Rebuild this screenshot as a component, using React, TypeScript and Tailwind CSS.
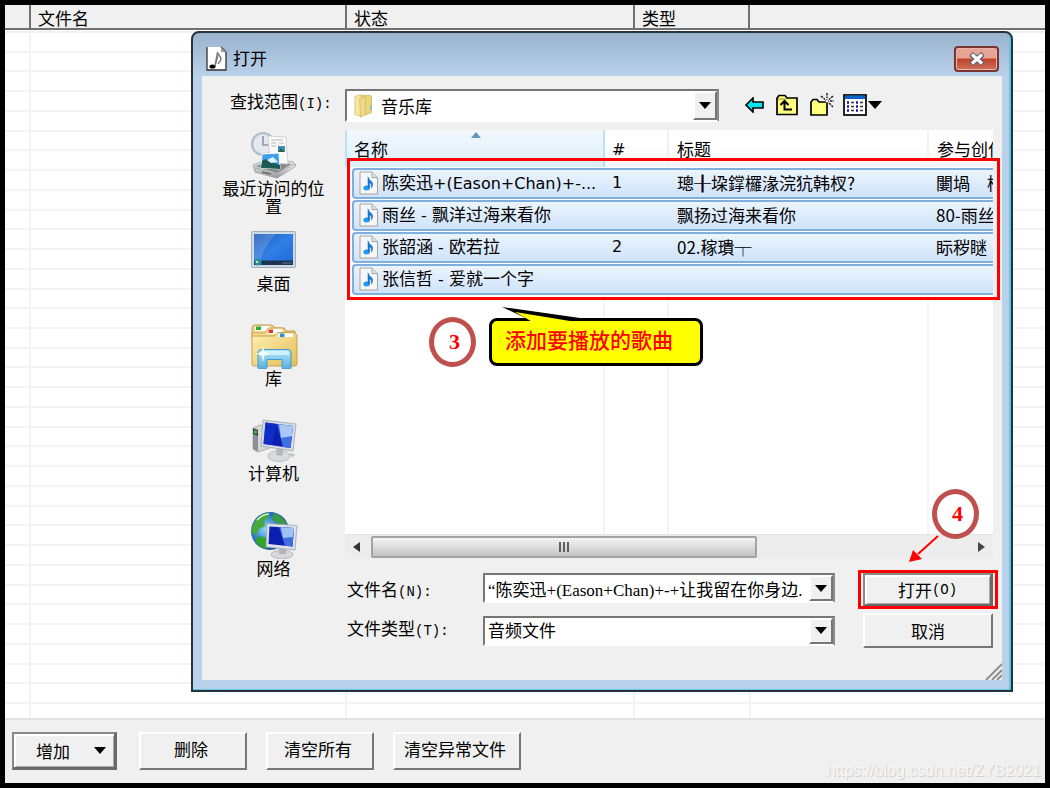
import type { ReactNode } from "react";

interface Song {
  name: ReactNode;
  track: string;
  title: string;
  artist: string;
}

const Latin = ({ children }: { children: ReactNode }) => (
  <span className="font-['DejaVu_Sans',sans-serif] text-base">{children}</span>
);

// Access key after a label, e.g. (N):
const Key = ({ children }: { children: ReactNode }) => (
  <span className="font-['Liberation_Mono',monospace] text-sm">{children}</span>
);

const songs: Song[] = [
  {
    name: (
      <>
        陈奕迅<Latin>+(Eason+Chan)+-...</Latin>
      </>
    ),
    track: "1",
    title: "璁╂垜鐣欏湪浣犺韩杈?",
    artist: "闄堝　杩",
  },
  { name: <>雨丝<Latin> - </Latin>飘洋过海来看你</>, track: "", title: "飘扬过海来看你", artist: "80-雨丝" },
  { name: <>张韶涵<Latin> - </Latin>欧若拉</>, track: "2", title: "02.稼璝┬", artist: "眎秽瞇" },
  { name: <>张信哲<Latin> - </Latin>爱就一个字</>, track: "", title: "", artist: "" },
];

const RecentIcon = () => (
  <svg width="48" height="48" viewBox="0 0 48 48" aria-hidden="true">
    <defs>
      <linearGradient id="tray" x1="0" y1="0" x2="0" y2="1">
        <stop offset="0" stopColor="#f4f4f4" />
        <stop offset="1" stopColor="#8f9294" />
      </linearGradient>
    </defs>
    <path d="M3 34 L20 27 L43 31 L46 34 L27 47 L5 41 Z" fill="url(#tray)" stroke="#a5a5a5" strokeWidth="0.8" />
    <path d="M6 35 L21 30 L41 33 L27 42 Z" fill="#85898c" />
    <circle cx="13" cy="13" r="11" fill="#dfe5eb" stroke="#b3bcc6" strokeWidth="2.2" />
    <circle cx="13" cy="13" r="8.5" fill="#e3e9ef" />
    <path d="M13 5 V14 H19" stroke="#8796a8" strokeWidth="1.6" fill="none" />
    <path d="M18 5 L36 6 L38 33 L20 32 Z" fill="#fafafa" stroke="#c9c9c9" strokeWidth="0.8" />
    <path d="M21 9 H33 M21 12 H26 M29 12 H34 M21 15 H26" stroke="#b5b5b5" strokeWidth="1" />
    <rect x="28" y="15" width="7" height="6" fill="#3f8db8" />
    <path d="M28 21 L31 17 L35 21 Z" fill="#2b6a45" />
    <path d="M12 23 L29 22 L30 38 L11 37 Z" fill="#3f9fe8" stroke="#fff" strokeWidth="1" />
    <path d="M12 30 Q17 26 21 31 L30 34 V38 L11 37 Z" fill="#1b5a55" />
    <path d="M17 29 L23 26 L28 31 L21 32 Z" fill="#e2f3fb" />
    <path d="M5 37 L27 42 L45 33 V36 L27 47 L5 41 Z" fill="url(#tray)" stroke="#a5a5a5" strokeWidth="0.7" />
    <path d="M12 41 L21 43" stroke="#666" strokeWidth="1.5" />
  </svg>
);

const DesktopIcon = () => (
  <svg width="48" height="48" viewBox="0 0 48 48" aria-hidden="true">
    <defs>
      <linearGradient id="desk" x1="0" y1="0" x2="1" y2="1">
        <stop offset="0" stopColor="#1f55b5" />
        <stop offset="0.5" stopColor="#2f80e6" />
        <stop offset="1" stopColor="#2365d8" />
      </linearGradient>
    </defs>
    <rect x="1.5" y="5.5" width="44" height="36" rx="1" fill="#cdd9e3" stroke="#9fb0bf" />
    <rect x="4" y="8" width="39" height="31" fill="url(#desk)" />
    <path d="M4 8 H26 Q14 20 10 35 H4 Z" fill="#fff" opacity="0.16" />
    <rect x="4" y="34.5" width="39" height="4.5" fill="#1c3450" />
    <circle cx="8" cy="36" r="3.5" fill="#2c8ba8" />
    <path d="M6 35 H8 V37 H6 Z" fill="#d9f47a" />
    <path d="M32 37 H42" stroke="#5d7690" strokeWidth="1" />
  </svg>
);

const LibraryIcon = () => (
  <svg width="48" height="48" viewBox="0 0 48 48" aria-hidden="true">
    <defs>
      <linearGradient id="folder" x1="0" y1="0" x2="1" y2="1">
        <stop offset="0" stopColor="#fff0b4" />
        <stop offset="1" stopColor="#e3bd57" />
      </linearGradient>
      <linearGradient id="stand" x1="0" y1="0" x2="0" y2="1">
        <stop offset="0" stopColor="#b5e9fb" />
        <stop offset="1" stopColor="#59addc" />
      </linearGradient>
    </defs>
    <path d="M2 7 Q2 4 5 4 H22 L25 7 H34 L36 10 H45 V16 H2 Z" fill="#f1d684" stroke="#c49a4a" />
    <rect x="5" y="5" width="15" height="5" fill="#fff" />
    <rect x="6" y="5.5" width="5" height="3.5" fill="#22b22c" />
    <path d="M2 12 H15 L18 7 H33 L36 10 V18 H2 Z" fill="#f5dd90" stroke="#c49a4a" strokeWidth="0.7" />
    <rect x="18" y="8" width="14" height="5" fill="#fff" />
    <rect x="18.5" y="8.5" width="4.5" height="3.5" fill="#d53b23" />
    <path d="M2 15 H24 L28 11.5 H44 L47 14 V43 Q47 45 45 45 H4 Q2 45 2 43 Z" fill="url(#folder)" stroke="#c9a04d" />
    <rect x="29" y="12.5" width="14" height="3.5" fill="#fff" />
    <rect x="30" y="12.5" width="4.5" height="3.5" fill="#258fe0" />
    <path d="M8 47 V32 Q8 28.5 12 28.5 H37 Q41 28.5 41 32 V47 Q41 48 39 48 H33 Q32 48 32 46 V38.500 H17 V46 Q17 48 15 48 H10 Q8 48 8 47 Z" fill="url(#stand)" stroke="#3f9bcf" />
    <path d="M10 34 V32 Q10 30 13 30 H36 Q39 30 39 32 V34 Z" fill="#d9f6ff" opacity="0.8" />
    <path d="M13 25 L14.500 31 L20 33 L14.500 34.500 L13 41 L11.500 34.500 L6 33 L11.500 31 Z" fill="#fff" opacity="0.9" />
  </svg>
);

const MonitorShape = () => (
  <>
    <path d="M0 1 L33 5 L30 32 L-2 27 Z" fill="#d7dce2" stroke="#9aa6b6" strokeWidth="0.8" />
    <path d="M2.500 3.500 L30 7 L27.500 29 L0.500 25 Z" fill="#0b1fb0" />
    <path d="M14 5 L30 7 L27.500 29 L20 28 Z" fill="#3f6fe0" />
    <path d="M16 5.300 L30 7 L29 17 L18 19 Z" fill="#c4ddff" opacity="0.8" />
    <path d="M2.500 3.500 L14 5 L9 26 L0.500 25 Z" fill="#1430cf" opacity="0.7" />
  </>
);

const ComputerIcon = () => (
  <svg width="48" height="48" viewBox="0 0 48 48" aria-hidden="true">
    <path d="M3 12 L10 9 L20 11 V32 L8 36 L3 33 Z" fill="#d3d5d7" stroke="#a0a0a0" strokeWidth="0.8" />
    <path d="M3 12 L8 14 V36 L3 33 Z" fill="#8c9093" />
    <path d="M3 12 L8 14 V20 L3 18 Z" fill="#45494c" />
    <circle cx="5.500" cy="16" r="1.600" fill="#3ccc35" />
    <path d="M10 17 H14 M10 20 H14" stroke="#fff" />
    <ellipse cx="29" cy="40" rx="11" ry="5.500" fill="#d9dbde" stroke="#b4b4b4" strokeWidth="0.8" />
    <path d="M27 31 L34 32 L32 40 L26 39 Z" fill="#b3b8bd" />
    <path d="M40 37 L45 38 L44 41 L39 40 Z" fill="#c3c6ca" />
    <g transform="translate(13 3)">
      <MonitorShape />
    </g>
  </svg>
);

const NetworkIcon = () => (
  <svg width="48" height="48" viewBox="0 0 48 48" aria-hidden="true">
    <defs>
      <radialGradient id="globe" cx="0.4" cy="0.45" r="0.65">
        <stop offset="0" stopColor="#9cdcfa" />
        <stop offset="0.5" stopColor="#3384d0" />
        <stop offset="1" stopColor="#123a7c" />
      </radialGradient>
    </defs>
    <circle cx="20" cy="20" r="19" fill="url(#globe)" />
    <path d="M4 12 Q9 4 17 2 L19 6 L14 10 L15 15 L9 18 L6 24 L2 22 Q1 16 4 12 Z" fill="#48a83c" />
    <path d="M24 2 Q33 5 37 13 L30 15 L26 11 L22 9 Z" fill="#3a9a4a" />
    <path d="M9 25 L17 27 L19 32 L15 38 Q8 35 5 30 Z" fill="#30a32b" />
    <path d="M7 9 Q13 3 19 3" stroke="#d7f5b0" strokeWidth="1.500" fill="none" />
    <ellipse cx="32" cy="43.500" rx="11" ry="4.300" fill="#d6d8db" stroke="#adadad" strokeWidth="0.8" />
    <path d="M29 36 H36 V43 H29 Z" fill="#b0b5ba" />
    <path d="M17 12.500 L47 14.500 L45 39 L16 36 Z" fill="#dde2e7" stroke="#9aa6b6" strokeWidth="0.8" />
    <path d="M19.500 15.500 L44 17 L42.500 35.500 L18.500 33 Z" fill="#0b1fb0" />
    <path d="M29 16 L44 17 L42.500 35.500 L35 34.700 Z" fill="#3f6fe0" />
    <path d="M31 16.300 L44 17 L43 26 L33 27 Z" fill="#bcd6ff" opacity="0.8" />
  </svg>
);

const FolderIcon = () => (
  <svg width="20" height="26" viewBox="0 0 20 26" aria-hidden="true">
    <path d="M1 3 L8 1 V24 L1 22 Z" fill="#f7e7a2" stroke="#d8bd63" strokeWidth="0.8" />
    <path d="M8 2 H17 Q18.500 2 18.500 4 V20 L10 23 Z" fill="#ecd47a" stroke="#d0b053" strokeWidth="0.8" />
    <path d="M6 5 L12 3 V22 L7 25 Z" fill="#efd98a" stroke="#d6b85c" strokeWidth="0.8" />
    <path d="M17 12 H19 V17 H17 Z" fill="#8cc4b5" />
  </svg>
);

const SongIcon = () => (
  <svg className="shrink-0" width="20" height="24" viewBox="0 0 20 24" aria-hidden="true">
    <path d="M1 1 H13 L18.500 6.500 V23 H1 Z" fill="#f7f7f7" stroke="#a3a3a3" />
    <path d="M13 1 V6.500 H18.500" fill="#e4e4e4" stroke="#a3a3a3" />
    <ellipse cx="7.500" cy="17" rx="3.200" ry="2.500" fill="#1f9bf0" />
    <path d="M9 17 V6 Q10 9 12.500 10.500 Q15 13 12.500 17 Q13 12.500 10.500 12 V17 Z" fill="#1976d2" stroke="#1976d2" strokeWidth="0.6" />
  </svg>
);

const TitleIcon = () => (
  <svg width="21" height="25" viewBox="0 0 21 25" aria-hidden="true">
    <path d="M1 1 H15 L20 6 V24 H1 Z" fill="#fff" />
    <path d="M1 1 V24 H20 V6 L15 1" fill="none" stroke="#333" strokeWidth="1.300" />
    <path d="M15 1 V6 H20 Z" fill="#999" />
    <ellipse cx="6.500" cy="20.500" rx="3" ry="2" fill="#000" />
    <path d="M9 20 L11.500 7 L15 12 Q15 15 12 18 M11.500 10 L10 17" fill="none" stroke="#777" strokeWidth="1.500" />
  </svg>
);

const places = [
  { label: "最近访问的位置", icon: <RecentIcon /> },
  { label: "桌面", icon: <DesktopIcon /> },
  { label: "库", icon: <LibraryIcon /> },
  { label: "计算机", icon: <ComputerIcon /> },
  { label: "网络", icon: <NetworkIcon /> },
];

const DownArrow = () => (
  <svg width="12" height="7" viewBox="0 0 12 7" aria-hidden="true">
    <path d="M0 0 H12 L6 7 Z" fill="#000" />
  </svg>
);

const sunken = "relative flex items-center bg-white border-2 border-t-[#767676] border-l-[#767676] border-r-[#8a8a8a] border-b-white";
const raised = "flex items-center justify-center bg-[#f0f0f0] border-2 border-t-white border-l-white border-r-[#767676] border-b-[#767676]";
const thick = "flex items-center justify-center bg-[#f0f0f0] border-2 border-[#8a8a8a] border-r-3 border-b-3 border-r-[#696969] border-b-[#696969] shadow-[inset_2px_2px_0_#fff,inset_-1px_-1px_0_#a8a8a8]";

const ArrowCap = () => (
  <span className={`${raised} pointer-events-none absolute inset-y-0 right-0 w-6`}>
    <DownArrow />
  </span>
);

const PlaylistTable = () => (
  <div className="flex flex-1 flex-col bg-white">
    <table className="w-full table-fixed border-b-2 border-[#707070] bg-[#f0f0f0]">
      <thead>
        <tr className="h-6 text-left">
          <th className="w-[25px] border-r-2 border-[#707070]" />
          <th className="w-[316px] border-r-2 border-[#707070] pl-[7px] pt-0.5 font-normal leading-5">文件名</th>
          <th className="w-[288px] border-r-2 border-[#707070] pl-[7px] pt-0.5 font-normal leading-5">状态</th>
          <th className="w-[115px] border-r-2 border-[#707070] pl-[7px] pt-0.5 font-normal leading-5">类型</th>
          <th />
        </tr>
      </thead>
    </table>
    <div className="grid flex-1 grid-cols-[26px_316px_288px_116px_1fr]" aria-hidden="true">
      {[0, 1, 2, 3, 4].map((col) => (
        <div key={col} className="flex flex-col border-r-2 border-[#f3f3f3] last:border-r-0">
          <div className="h-[3px] border-b-2 border-[#f0f0f0]" />
          {Array.from({ length: 34 }, (_, i) => (
            <div key={i} className="flex-1 border-b-2 border-[#f3f3f3]" />
          ))}
          <div className="h-3.5" />
        </div>
      ))}
    </div>
  </div>
);

const Places = () => (
  <nav className="flex flex-col items-center pt-px">
    {places.map(({ label, icon }) => (
      <button key={label} className="flex h-[95px] w-[112px] flex-col items-center text-center leading-[18px]">
        <span className="h-12">{icon}</span>
        {label}
      </button>
    ))}
  </nav>
);

const ToolIcons = () => (
  <div className="flex w-[274px] items-center pb-0.5 pl-[26px]">
    <button aria-label="后退" className="mr-3">
      <svg width="19" height="16" viewBox="0 0 19 16">
        <path d="M1 8 L8 1 V5 H18 V11 H8 V15 Z" fill="#00e5ee" stroke="#000" strokeWidth="1.600" />
      </svg>
    </button>
    <button aria-label="向上一级" className="mr-3">
      <svg width="22" height="22" viewBox="0 0 22 22">
        <path d="M1 20.500 V4 L3 1.500 H9 L11 4 H21 V20.500 Z" fill="#ffff7d" stroke="#000" strokeWidth="1.700" />
        <path d="M2 5 H11" stroke="#8a8a30" />
        <path d="M8.500 7 V15.500 H16 M4.500 11 L8.500 7 L12.500 11" fill="none" stroke="#000" strokeWidth="2" />
      </svg>
    </button>
    <button aria-label="新建文件夹" className="mr-2">
      <svg width="25" height="24" viewBox="0 0 25 24">
        <path d="M1 22 V9 L3 6.500 H7 L9 9 H17 V22 Z" fill="#ffff7d" stroke="#000" strokeWidth="1.700" />
        <path d="M17 0 V5 M17 11 V15 M20 8 H24 M11 3 L15 6.500 M23 3 L19 6.500 M19 10 L23 14" stroke="#222" strokeWidth="1.500" strokeDasharray="2.500 1" />
        <path d="M15 8 L17 6 L19 8 L17 10 Z" fill="#fff" stroke="#555" strokeWidth="0.8" />
      </svg>
    </button>
    <button aria-label="视图" className="flex items-center gap-px">
      <svg width="24" height="22" viewBox="0 0 24 22">
        <rect x="1" y="1" width="22" height="20" fill="#fff" stroke="#000" strokeWidth="1.700" />
        <rect x="2" y="1.500" width="20" height="3.500" fill="#0a64c8" />
        <path d="M4 8.500 H6 M4 12.500 H6 M4 16.500 H6 M13 8.500 H15 M13 12.500 H15 M13 16.500 H15" stroke="#1414a8" strokeWidth="2.500" />
        <path d="M8 8.500 H11 M8 12.500 H11 M8 16.500 H11 M17 8.500 H20 M17 12.500 H20 M17 16.500 H20" stroke="#333" strokeWidth="1.500" />
      </svg>
      <svg width="14" height="8" viewBox="0 0 14 8">
        <path d="M0 0 H14 L7 8 Z" fill="#000" />
      </svg>
    </button>
  </div>
);

const rowFill = "flex h-[31px] items-center bg-linear-to-b from-[#ecf4fd] to-[#cfe3fb] border-[#7fafe0]";

const SongList = () => (
  <div className="h-[404px] overflow-hidden bg-white">
    <table className="h-full w-full table-fixed whitespace-nowrap text-left">
      <thead>
        <tr className="h-[37px] bg-linear-to-b from-white from-40% to-[#f4f5f7]">
          <th className="relative w-[258px] border-x-2 border-[#b5e2f8] bg-linear-to-b from-[#f3f8fd] to-[#dceefa] p-0 pl-[7px] font-normal">
            名称
            <svg className="absolute left-[124px] top-0.5" width="10" height="6" viewBox="0 0 10 6" aria-hidden="true">
              <path d="M5 0 L10 6 H0 Z" fill="#5b9ab8" />
            </svg>
          </th>
          <th className="w-[64px] border-r-2 border-[#eef2f7] p-0 pl-[7px] font-normal">
            <Latin>#</Latin>
          </th>
          <th className="w-[260px] border-r-2 border-[#eef2f7] p-0 pl-2 font-normal">标题</th>
          <th className="overflow-hidden p-0 pl-2 font-normal">参与创作</th>
        </tr>
      </thead>
      <tbody>
        {songs.map((song, i) => (
          <tr key={i} className="h-8">
            <td className="p-0 pl-1.5">
              <div className={`${rowFill} gap-[3px] rounded-l border-2 border-r-0 pl-[5px]`}>
                <SongIcon />
                <span>{song.name}</span>
              </div>
            </td>
            <td className="p-0">
              <div className={`${rowFill} border-y-2 pl-2`}>
                <Latin>{song.track}</Latin>
              </div>
            </td>
            <td className="p-0">
              <div className={`${rowFill} border-y-2 pl-[9px]`}>{song.title}</div>
            </td>
            <td className="overflow-hidden p-0">
              <div className={`${rowFill} border-y-2 pl-2`}>{song.artist}</div>
            </td>
          </tr>
        ))}
        <tr>
          <td className="border-r-2 border-[#eff5fc]" />
          <td className="border-r-2 border-[#eff5fc]" />
          <td className="border-r-2 border-[#eff5fc]" />
          <td />
        </tr>
      </tbody>
    </table>
  </div>
);

const ScrollBar = () => (
  <div className="flex h-6 items-center border-t border-[#e3e3e3] bg-[#ededed]">
    <span className="flex w-[26px] justify-center pr-1">
      <svg width="7" height="10" viewBox="0 0 7 10" aria-hidden="true">
        <path d="M7 0 V10 L0 5 Z" fill="#333" />
      </svg>
    </span>
    <div className="flex flex-1">
      <div className="flex h-[22px] w-[386px] items-center justify-center gap-0.5 rounded-xs border-2 border-[#a3a3a3] bg-linear-to-b from-[#f5f5f5] via-[#dcdcdc] to-[#c4c4c4]">
        {[0, 1, 2].map((i) => (
          <span key={i} className="h-2.5 w-0.5 bg-[#606060]" />
        ))}
      </div>
    </div>
    <span className="flex w-6 justify-center">
      <svg width="7" height="10" viewBox="0 0 7 10" aria-hidden="true">
        <path d="M0 0 V10 L7 5 Z" fill="#444" />
      </svg>
    </span>
  </div>
);

const Annotations = () => (
  <>
    <div className="pointer-events-none absolute left-[154px] right-[11px] top-[125px] h-[142px] border-[3px] border-[#ff0000]" />
    <div className="absolute left-[236px] top-[284px] flex h-[50px] w-[47px] items-center justify-center rounded-[50%] border-5 border-[#c0504d] pl-1 font-['Liberation_Serif',serif] text-[22px] font-bold text-[#ff0000]">
      3
    </div>
    <div className="absolute left-[296px] top-[285px] h-12 w-[214px] rounded-lg border-[3px] border-black bg-[#ffff00] pl-[13px] text-[21px] font-medium leading-[36px] text-[#ff0000]">
      添加要播放的歌曲
      <svg className="absolute -top-[14px] left-2.5" width="84" height="18" viewBox="0 0 84 18" aria-hidden="true">
        <path d="M0 0 L78 11 V14 H30 Z" fill="#000" />
        <path d="M13 5 L68 14 V17 H34 Z" fill="#ffff00" />
      </svg>
    </div>
    <div className="absolute right-8 top-[456px] flex h-[50px] w-[47px] items-center justify-center rounded-[50%] border-5 border-[#c0504d] bg-white pl-1 font-['Liberation_Serif',serif] text-[22px] font-bold text-[#ff0000]">
      4
    </div>
    <svg className="absolute right-[72px] top-[502px]" width="30" height="28" viewBox="0 0 30 28" aria-hidden="true">
      <path d="M29 1 L9 19" stroke="#f00" strokeWidth="2" />
      <path d="M0 27 L4 15 L13 24 Z" fill="#f00" />
    </svg>
    <div className="pointer-events-none absolute right-[13px] top-[537px] h-[39px] w-[140px] border-[3px] border-[#ff0000]" />
  </>
);

const OpenDialog = () => (
  <div
    role="dialog"
    aria-labelledby="dialog-title"
    className="absolute left-[186px] right-8 top-[26px] rounded-t-lg border-2 border-[#26323c] bg-[#b9d1ea] bg-linear-to-b from-[#9ab3ce] to-[#b9d1ea] to-[44px] px-[9px] pb-2.5 shadow-[inset_-2px_-1px_0_#5cc8e0]"
  >
    <header className="flex h-[43px] items-center pl-1 pr-[3px] pt-2">
      <TitleIcon />
      <h1 id="dialog-title" className="ml-1.5 flex-1 pb-0.5">
        打开
      </h1>
      <button
        aria-label="关闭"
        className="flex h-[26px] w-[45px] items-center justify-center rounded-sm border-2 border-[#7a3434] bg-linear-to-b from-[#e6a594] from-45% via-[#bf4128] via-50% to-[#d0705a] shadow-[inset_0_0_0_1px_#eab5a8]"
      >
        <svg width="18" height="14" viewBox="0 0 18 14">
          <path d="M3 2 L15 12 M15 2 L3 12" stroke="#555f6b" strokeWidth="5.500" />
          <path d="M4 2.500 L14 11.500 M14 2.500 L4 11.500" stroke="#fff" strokeWidth="3.200" />
        </svg>
      </button>
    </header>

    <form className="relative grid grid-cols-[143px_1fr] bg-[#f0f0f0] pb-8 pr-[9px] pt-[13px]" onSubmit={(e) => e.preventDefault()}>
      <label htmlFor="look-in" className="mb-2 pl-7">
        查找范围<Key>(I):</Key>
      </label>
      <div className="mb-2 flex">
        <div className={`${sunken} h-[33px] flex-1 pl-[7px]`}>
          <FolderIcon />
          <select id="look-in" className="h-full w-full appearance-none pl-2 outline-none">
            <option>音乐库</option>
          </select>
          <ArrowCap />
        </div>
        <ToolIcons />
      </div>

      <Places />
      <div className="min-w-0">
        <SongList />
        <ScrollBar />
        <div className="mt-[15px] flex items-start">
          <label htmlFor="file-name" className="w-[138px] shrink-0 pl-0.5 pt-1">
            文件名<Key>(N):</Key>
          </label>
          <div className={`${sunken} h-[30px] min-w-0 flex-1`}>
            <input
              id="file-name"
              className="h-full w-full min-w-0 pl-[3px] pr-6 font-['Liberation_Serif','Noto_Sans_CJK_SC',serif] outline-none"
              defaultValue="“陈奕迅+(Eason+Chan)+-+让我留在你身边."
            />
            <ArrowCap />
          </div>
          <button type="submit" className={`${thick} ml-7 h-[34px] w-[130px] shrink-0`}>
            打开<Key>(O)</Key>
          </button>
        </div>
        <div className="mt-1.5 flex items-center">
          <label htmlFor="file-type" className="w-[138px] shrink-0 pb-1 pl-0.5">
            文件类型<Key>(T):</Key>
          </label>
          <div className={`${sunken} h-[30px] min-w-0 flex-1`}>
            <select id="file-type" className="h-full w-full appearance-none pb-0.5 pl-[3px] outline-none">
              <option>音频文件</option>
            </select>
            <ArrowCap />
          </div>
          <button type="button" className={`${raised} ml-7 h-[35px] w-[130px] shrink-0`}>
            取消
          </button>
        </div>
      </div>
      <svg className="absolute bottom-0 right-0" width="17" height="17" viewBox="0 0 17 17" aria-hidden="true">
        <path d="M1 17 L17 1 M7 17 L17 7 M12 17 L17 12" stroke="#8f8f8f" strokeWidth="2" />
      </svg>
    </form>

    <Annotations />
  </div>
);

export default function App() {
  return (
    <div className="relative flex min-h-screen flex-col border-5 border-black bg-[#f0f0f0] font-['Noto_Sans_CJK_SC',sans-serif] text-[17px] leading-6 text-black">
      <PlaylistTable />
      <footer className="flex h-[65px] items-start border-t-2 border-[#e2e2e2] pl-[7px] pt-3">
        <button className={`${thick} mr-[22px] h-[38px] w-[105px] gap-6 pl-3.5`}>
          增加
          <DownArrow />
        </button>
        <button className={`${raised} mr-[19px] h-[38px] w-[108px] pb-1 pr-1`}>删除</button>
        <button className={`${raised} mr-[19px] h-[38px] w-[108px] pb-1 pr-1`}>清空所有</button>
        <button className={`${raised} h-[38px] w-[128px] pb-1 pr-1`}>清空异常文件</button>
        <span className="ml-auto self-end pr-1 font-['Liberation_Sans',sans-serif] text-base text-[#f6f6f6] [text-shadow:1px_1px_1px_#ccc]">
          https://blog.csdn.net/ZYB2021
        </span>
      </footer>
      <OpenDialog />
    </div>
  );
}
